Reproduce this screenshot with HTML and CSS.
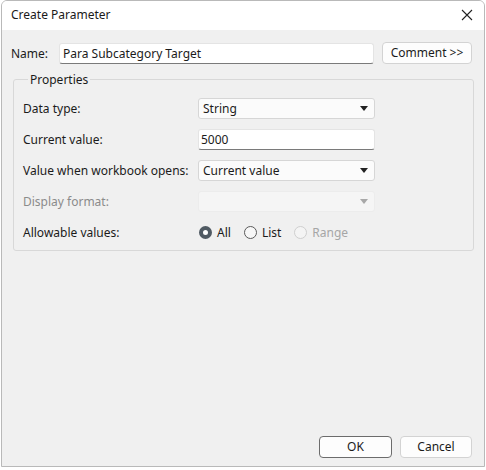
FILE: index.html
```html
<!DOCTYPE html>
<html>
<head>
<meta charset="utf-8">
<link rel="stylesheet" href="styles.css">
</head>
<body>
<div class="window">
  <div class="titlebar">
    <span class="title">Create Parameter</span>
    <svg class="close" width="12" height="12" viewBox="0 0 12 12"><path d="M1 1L11 11M11 1L1 11" stroke="#222" stroke-width="1.1" fill="none"/></svg>
  </div>
  <div class="body">
    <div class="name-row">
      <span class="name-label">Name:</span>
      <div class="textbox name-box">Para Subcategory Target</div>
      <div class="button comment-btn">Comment &gt;&gt;</div>
    </div>
    <fieldset class="group">
      <legend>Properties</legend>
      <div class="row">
        <span class="label">Data type:</span>
        <div class="combo"><span>String</span><svg class="caret" width="8" height="5" viewBox="0 0 8 5"><path d="M0 0H8L4 5Z" fill="#222"/></svg></div>
      </div>
      <div class="row">
        <span class="label">Current value:</span>
        <div class="textbox value-box">5000</div>
      </div>
      <div class="row">
        <span class="label">Value when workbook opens:</span>
        <div class="combo"><span>Current value</span><svg class="caret" width="8" height="5" viewBox="0 0 8 5"><path d="M0 0H8L4 5Z" fill="#222"/></svg></div>
      </div>
      <div class="row">
        <span class="label disabled">Display format:</span>
        <div class="combo combo-disabled"><span></span><svg class="caret" width="8" height="5" viewBox="0 0 8 5"><path d="M0 0H8L4 5Z" fill="#a8a8a8"/></svg></div>
      </div>
      <div class="row">
        <span class="label">Allowable values:</span>
        <div class="radios">
          <span class="radio"><span class="dot checked"></span>All</span>
          <span class="radio"><span class="dot"></span>List</span>
          <span class="radio disabled"><span class="dot dot-disabled"></span>Range</span>
        </div>
      </div>
    </fieldset>
    <div class="spacer"></div>
    <div class="footer">
      <div class="button ok-btn">OK</div>
      <div class="button">Cancel</div>
    </div>
  </div>
</div>
</body>
</html>
```

FILE: styles.css
```css
html, body {
  margin: 0;
  padding: 0;
  background: #ffffff;
}
body {
  width: 486px;
  height: 470px;
  font-family: "Noto Sans", "Open Sans", sans-serif;
  font-size: 12px;
  color: #1b1b1b;
}
.window {
  box-sizing: border-box;
  width: 484px;
  height: 467px;
  margin-left: 1px;
  border: 1px solid #b9b9b9;
  border-radius: 6px 6px 0 0;
  display: flex;
  flex-direction: column;
  overflow: hidden;
  background: #f0f0f0;
}
.titlebar {
  height: 29px;
  flex: none;
  background: #ffffff;
  display: flex;
  align-items: center;
  justify-content: space-between;
  padding: 0 10px 0 9px;
}
.title {
  font-size: 12px;
  color: #1a1a1a;
  margin-top: -2px;
}
.close {
  margin-right: 1px;
  margin-top: -1px;
}
.body {
  flex: 1;
  display: flex;
  flex-direction: column;
  padding: 12px 12px 8px 9px;
}
.name-row {
  display: flex;
  align-items: center;
  height: 22px;
}
.name-label {
  width: 48px;
}
.textbox {
  box-sizing: border-box;
  background: #ffffff;
  border: 1px solid #e4e4e4;
  border-bottom: 1px solid #7a7a7a;
  border-radius: 3px;
  height: 21px;
  line-height: 19px;
  padding-left: 3px;
}
.name-box {
  width: 315px;
}
.button {
  box-sizing: border-box;
  background: #fdfdfd;
  border: 1px solid #d3d3d3;
  border-radius: 4px;
  height: 22px;
  line-height: 20px;
  text-align: center;
  width: 72px;
}
.comment-btn {
  width: 90px;
  margin-left: 8px;
}
.group {
  margin: 7px 0 0 2px;
  padding: 10px 8px 7px 9px;
  border: 1px solid #d8d8d8;
  border-radius: 3px;
  width: 461px;
  box-sizing: border-box;
  display: flex;
  flex-direction: column;
  gap: 10px;
}
legend {
  padding: 0 2px;
  margin-left: 5px;
  font-size: 12px;
}
.row {
  display: flex;
  align-items: center;
  height: 21px;
}
.label {
  width: 175px;
}
.disabled {
  color: #8b8b8b;
}
.combo {
  box-sizing: border-box;
  width: 177px;
  height: 21px;
  background: #fbfbfb;
  border: 1px solid #d6d6d6;
  border-radius: 3px;
  display: flex;
  align-items: center;
  justify-content: space-between;
  padding: 0 6px 0 4px;
}
.combo-disabled {
  background: #f5f5f5;
  border-color: #ececec;
}
.value-box {
  width: 177px;
  padding-left: 2px;
}
.radios {
  display: flex;
  align-items: center;
  gap: 13px;
  padding-left: 1px;
}
.radio {
  display: flex;
  align-items: center;
  gap: 5px;
}
.radio.disabled {
  color: #a6a6a6;
}
.dot {
  box-sizing: border-box;
  width: 13px;
  height: 13px;
  border-radius: 50%;
  border: 1px solid #5a5a5a;
  background: #f7f7f7;
}
.dot.checked {
  border: 4px solid #505a63;
  background: #ffffff;
}
.dot-disabled {
  border-color: #cfcfcf;
  background: #f4f4f4;
}
.spacer {
  flex: 1;
}
.footer {
  display: flex;
  justify-content: flex-end;
  gap: 8px;
  padding-right: 0;
}
.ok-btn {
  border: 1px solid #6c6c6c;
  width: 73px;
}
```
